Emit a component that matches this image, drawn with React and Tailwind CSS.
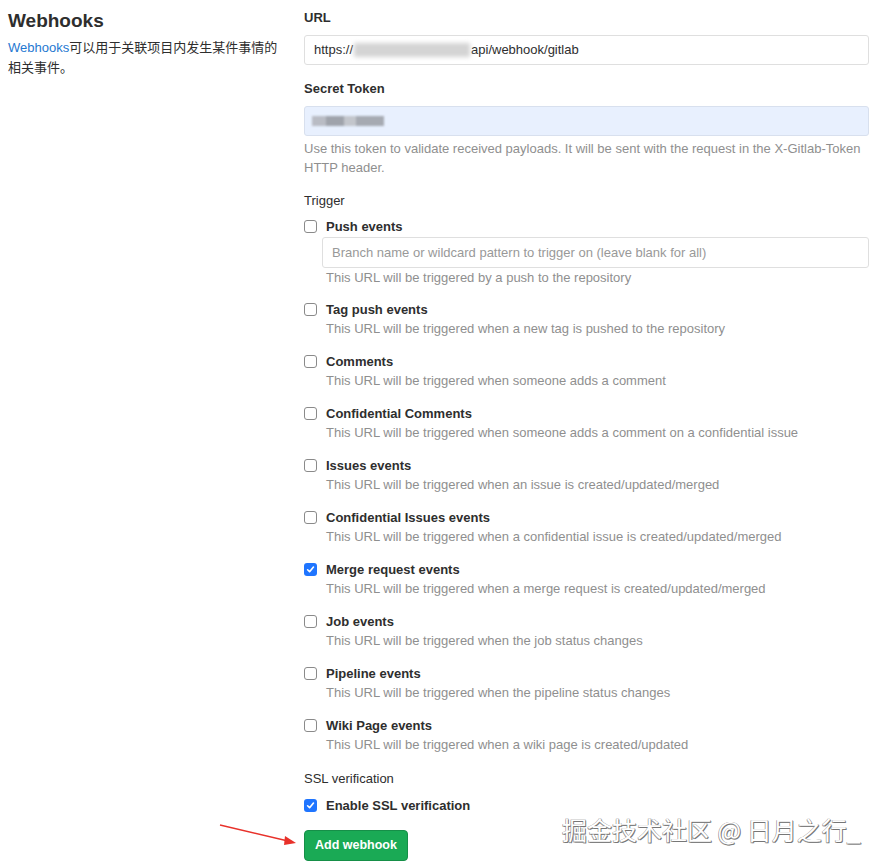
import React from "react";

const font = { fontFamily: '"Liberation Sans", "Noto Sans CJK SC", Arial, sans-serif' };

function Check({ checked }) {
  if (checked) {
    return (
      <span className="mt-[3px] flex h-[13px] w-[13px] shrink-0 items-center justify-center rounded-[3px] bg-[#1f75ff]">
        <svg width="9" height="9" viewBox="0 0 10 10">
          <path d="M1.8 5.3 L4 7.5 L8.3 2.3" stroke="white" strokeWidth="1.8" fill="none" strokeLinecap="round" strokeLinejoin="round" />
        </svg>
      </span>
    );
  }
  return <span className="mt-[3px] block h-[13px] w-[13px] shrink-0 rounded-[3px] border border-[#8a8a8a] bg-white" />;
}

const items = [
  ["Tag push events", "This URL will be triggered when a new tag is pushed to the repository"],
  ["Comments", "This URL will be triggered when someone adds a comment"],
  ["Confidential Comments", "This URL will be triggered when someone adds a comment on a confidential issue"],
  ["Issues events", "This URL will be triggered when an issue is created/updated/merged"],
  ["Confidential Issues events", "This URL will be triggered when a confidential issue is created/updated/merged"],
  ["Merge request events", "This URL will be triggered when a merge request is created/updated/merged", true],
  ["Job events", "This URL will be triggered when the job status changes"],
  ["Pipeline events", "This URL will be triggered when the pipeline status changes"],
  ["Wiki Page events", "This URL will be triggered when a wiki page is created/updated"],
];

function Item({ label, help, checked }) {
  return (
    <div className="flex gap-[9px]">
      <Check checked={checked} />
      <div className="flex flex-col">
        <div className="h-[19px] text-[13px] font-bold leading-[19px] text-[#2e2e2e]">{label}</div>
        <div className="h-[19px] text-[13px] leading-[19px] text-[#8f8f8f]">{help}</div>
      </div>
    </div>
  );
}

export default function App() {
  return (
    <div className="relative flex h-[868px] w-[885px] overflow-hidden bg-white" style={font}>
      <div className="w-[296px] shrink-0 pl-2 pt-[9px]">
        <h1 className="text-[19px] font-bold leading-[24px] text-[#2e2e2e]">Webhooks</h1>
        <p className="mt-[5px] w-[270px] text-[13px] leading-[20px] text-[#2e2e2e]">
          <span className="text-[#1f78d1]">Webhooks</span>可以用于关联项目内发生某件事情的相关事件。
        </p>
      </div>
      <div className="flex w-[573px] flex-col pl-2 pt-[8px]">
        <div className="text-[13px] font-bold leading-[19px] text-[#2e2e2e]">URL</div>
        <div className="mt-2 flex h-[30px] items-center rounded-[3px] border border-[#dfdfdf] px-[9px] text-[13px] text-[#2e2e2e]">
          https://
          <span className="relative mx-[1px] inline-block h-[14px] w-[116px]">
            <span className="absolute inset-0 bg-[#d4d4d4] blur-[2px]" />
          </span>
          api/webhook/gitlab
        </div>
        <div className="mt-[14px] text-[13px] font-bold leading-[19px] text-[#2e2e2e]">Secret Token</div>
        <div className="mt-2 flex h-[30px] items-center rounded-[3px] border border-[#d8e0ee] bg-[#e8f0fe] px-[7px]">
          <span className="flex h-[10px] w-[72px] blur-[1px]">
            <span className="h-full w-[14px] bg-[#b9bcc4]" />
            <span className="h-full w-[18px] bg-[#9fa3ab]" />
            <span className="h-full w-[12px] bg-[#c3c6cc]" />
            <span className="h-full w-[28px] bg-[#a6aab2]" />
          </span>
        </div>
        <div className="mt-[3px] text-[13px] leading-[19px] text-[#8f8f8f]">
          Use this token to validate received payloads. It will be sent with the request in the X-Gitlab-Token HTTP header.
        </div>
        <div className="mt-[14px] text-[13px] font-medium leading-[19px] text-[#2e2e2e]">Trigger</div>
        <div className="mt-[7px] flex gap-[9px]">
          <Check />
          <div className="flex flex-1 flex-col">
            <div className="h-[19px] text-[13px] font-bold leading-[19px] text-[#2e2e2e]">Push events</div>
            <div className="-ml-1 mt-[1px] flex h-[31px] items-center rounded-[3px] border border-[#dfdfdf] px-[9px] text-[13px] text-[#999]">
              Branch name or wildcard pattern to trigger on (leave blank for all)
            </div>
            <div className="h-[19px] text-[13px] leading-[19px] text-[#8f8f8f]">This URL will be triggered by a push to the repository</div>
          </div>
        </div>
        <div className="mt-[13px] flex flex-col gap-[14px]">
          {items.map(([l, h, c]) => (
            <Item key={l} label={l} help={h} checked={c} />
          ))}
        </div>
        <div className="mt-[15px] text-[13px] font-medium leading-[19px] text-[#2e2e2e]">SSL verification</div>
        <div className="mt-2 flex gap-[9px]">
          <Check checked />
          <div className="text-[13px] font-bold leading-[19px] text-[#2e2e2e]">Enable SSL verification</div>
        </div>
        <div className="mt-[15px] flex">
          <button className="h-[31px] rounded-[4px] border border-[#168f48] bg-[#1aaa55] px-[10px] text-[12.5px] font-bold text-white">
            Add webhook
          </button>
        </div>
      </div>
      <svg className="absolute left-[218px] top-[822px]" width="82" height="26" viewBox="0 0 82 26">
        <line x1="2" y1="3" x2="70" y2="19" stroke="#e8312a" strokeWidth="1.3" />
        <path d="M78 21 L67 14 L66 23 Z" fill="#e8312a" />
      </svg>
      <div
        className="absolute left-[562px] top-[812px] text-[25px] leading-[34px] text-white"
        style={{ fontFamily: '"Noto Sans CJK SC", sans-serif', textShadow: "1px 1px 0 #777, -0.5px -0.5px 0 #999, 0.5px -0.5px 0 #999, -0.5px 0.5px 0 #999" }}
      >
        掘金技术社区 @ 日月之行_
      </div>
    </div>
  );
}
